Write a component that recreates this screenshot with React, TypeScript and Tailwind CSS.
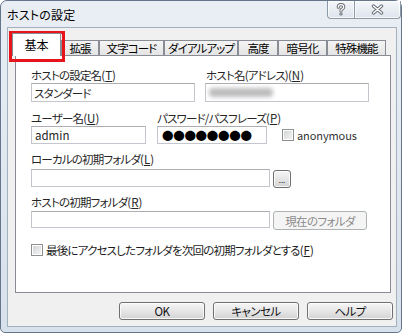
import React from 'react';

const Mn: React.FC<{ k: string }> = ({ k }) => (
  <span className="tracking-normal">
    (<span className="underline underline-offset-[1px]">{k}</span>)
  </span>
);

const Label: React.FC<{ children: React.ReactNode; className?: string }> = ({ children, className = '' }) => (
  <div className={`h-[16px] leading-[16px] text-[11.5px] tracking-[-0.8px] whitespace-nowrap ${className}`}>{children}</div>
);

const TextBox: React.FC<{ className: string; children?: React.ReactNode }> = ({ className, children }) => (
  <div
    className={`border border-[#c3c6cd] border-t-[#abadb3] bg-white pl-[2px] text-[11.5px] leading-[16px] flex items-center overflow-hidden whitespace-nowrap ${className}`}
  >
    {children}
  </div>
);

const CheckBox: React.FC = () => (
  <div className="w-[12px] h-[12px] border border-[#8e8f8f] bg-white p-px shrink-0">
    <div className="w-full h-full bg-linear-to-br from-[#d2d4d6] to-[#f4f4f4]" />
  </div>
);

const PushButton: React.FC<{ children: React.ReactNode; className?: string }> = ({ children, className = '' }) => (
  <div
    className={`border border-[#707070] rounded-[3px] bg-linear-to-b from-[#f6f6f6] via-[#e6e6e6] to-[#d3d3d3] shadow-[inset_0_0_0_1px_rgba(255,255,255,0.8)] flex items-center justify-center text-[11.5px] leading-[14px] tracking-[-0.6px] text-[#111] ${className}`}
  >
    {children}
  </div>
);

const tabs = [
  { label: '拡張', w: 'w-[38px]' },
  { label: '文字コード', w: 'w-[65px]' },
  { label: 'ダイアルアップ', w: 'w-[74px]' },
  { label: '高度', w: 'w-[40px]' },
  { label: '暗号化', w: 'w-[49px]' },
  { label: '特殊機能', w: 'w-[59px]' },
];

export default function App() {
  return (
    <div className="w-[408px] h-[336px] bg-white relative font-['Noto_Sans_CJK_JP',sans-serif] [font-feature-settings:'palt'] text-[#262626]">
      <div className="w-[402px] h-[333px] border border-[#66768a] rounded-t-[7px] rounded-b-[5px] bg-linear-to-b from-[#e9eef4] to-[#d7e1ec] flex flex-col">
        {/* title bar */}
        <div className="h-[26px] flex items-start shrink-0">
          <span className="ml-[6px] mt-[6px] text-[12px] leading-[16px] tracking-[0.2px] text-black">ホストの設定</span>
          <div className="ml-auto flex">
            <div className="w-[28px] h-[18px] border border-t-0 border-[#8d99a8] rounded-bl-[4px] bg-linear-to-b from-[#f4f7fa] to-[#dde4ec] shadow-[inset_0_0_0_1px_rgba(255,255,255,0.7)] flex items-center justify-center">
              <svg width="10" height="13" viewBox="0 0 10 13">
                <path d="M2.3 4.2 Q2.3 1.6 5 1.6 Q7.7 1.6 7.7 4 Q7.7 5.6 5.6 6.5 Q5 6.8 5 8" fill="none" stroke="#6a6f75" strokeWidth="3.2" strokeLinecap="round" />
                <path d="M2.3 4.2 Q2.3 1.6 5 1.6 Q7.7 1.6 7.7 4 Q7.7 5.6 5.6 6.5 Q5 6.8 5 8" fill="none" stroke="#ffffff" strokeWidth="1.3" strokeLinecap="round" />
                <circle cx="5" cy="11" r="1.6" fill="#6a6f75" />
                <circle cx="5" cy="11" r="0.6" fill="#ffffff" />
              </svg>
            </div>
            <div className="w-[47px] h-[18px] -ml-px border border-t-0 border-[#8d99a8] rounded-br-[4px] bg-linear-to-b from-[#f4f7fa] to-[#dde4ec] shadow-[inset_0_0_0_1px_rgba(255,255,255,0.7)] flex items-center justify-center">
              <svg width="13" height="11" viewBox="0 0 13 11">
                <path d="M2.5 2 L10.5 9 M10.5 2 L2.5 9" fill="none" stroke="#6a6f75" strokeWidth="3.4" strokeLinecap="round" />
                <path d="M2.5 2 L10.5 9 M10.5 2 L2.5 9" fill="none" stroke="#ffffff" strokeWidth="1.4" strokeLinecap="round" />
              </svg>
            </div>
          </div>
        </div>

        {/* body */}
        <div className="pl-[6px] pr-[4px] pb-[5px]">
          <div className="w-[390px] h-[300px] border border-[#a3b0bf] bg-[#f0f0f0] flex flex-col">
            {/* tabs */}
            <div className="flex items-end h-[23px] mt-[5px] pl-[4px] shrink-0">
              <div className="relative z-10 w-[49px] h-[23px] border border-b-0 border-[#898c95] bg-white text-center pt-[3px] text-[12px] leading-[16px] text-black">
                基本
              </div>
              {tabs.map((t) => (
                <div
                  key={t.label}
                  className={`${t.w} h-[16px] border border-b-0 border-[#898c95] bg-linear-to-b from-[#f4f4f4] to-[#e3e3e3] text-center text-[11.5px] leading-[14px] tracking-[-0.9px] text-black whitespace-nowrap`}
                >
                  {t.label}
                </div>
              ))}
            </div>

            {/* panel */}
            <div className="ml-[7px] -mt-px w-[376px] h-[238px] border border-[#898c95] bg-white pl-[15px] pt-[11px] shrink-0">
              <div className="flex gap-[10px]">
                <div className="w-[164px]">
                  <Label>
                    ホストの設定名<Mn k="T" />
                  </Label>
                  <TextBox className="w-[164px] h-[19px] tracking-[-0.8px]">スタンダード</TextBox>
                </div>
                <div className="w-[164px]">
                  <Label className="pl-px">
                    ホスト名(アドレス)<Mn k="N" />
                  </Label>
                  <TextBox className="w-[164px] h-[19px]">
                    <div className="ml-[1px] w-[64px] h-[9px] rounded-sm bg-[#bdbdbd] blur-[2px]" />
                  </TextBox>
                </div>
              </div>

              <div className="flex items-end mt-[8px]">
                <div className="w-[115px]">
                  <Label>
                    ユーザー名<Mn k="U" />
                  </Label>
                  <TextBox className="w-[115px] h-[18px] pl-[3px]">admin</TextBox>
                </div>
                <div className="ml-[11px] w-[110px]">
                  <Label>
                    パスワード/パスフレーズ<Mn k="P" />
                  </Label>
                  <TextBox className="w-[110px] h-[18px] pl-[4px]">
                    <span className="text-[11.5px] tracking-[-0.3px] text-black font-bold [font-feature-settings:normal]">●●●●●●●●</span>
                  </TextBox>
                </div>
                <div className="ml-[15px] mb-[1px] flex items-center gap-[3px] h-[16px]">
                  <CheckBox />
                  <span className="text-[11px] leading-[16px] tracking-[-0.1px] text-[#333] -mt-px">anonymous</span>
                </div>
              </div>

              <Label className="mt-[7px]">
                ローカルの初期フォルダ<Mn k="L" />
              </Label>
              <div className="flex items-start mt-[2px] gap-[3px]">
                <TextBox className="w-[239px] h-[18px]" />
                <PushButton className="w-[18px] h-[18px] mt-px items-end pb-[3px]">
                  <span className="text-[8px] leading-[8px] tracking-normal">...</span>
                </PushButton>
              </div>

              <Label className="mt-[6px]">
                ホストの初期フォルダ<Mn k="R" />
              </Label>
              <div className="flex items-start mt-px gap-[3px]">
                <TextBox className="w-[239px] h-[17px]" />
                <div className="w-[94px] h-[19px] border border-[#adb2b5] rounded-[3px] bg-[#f4f4f4] flex items-center justify-center text-[11.5px] leading-[14px] tracking-[-0.6px] text-[#8b8b8b]">
                  現在のフォルダ
                </div>
              </div>

              <div className="flex items-center gap-[3px] mt-[13px] h-[13px]">
                <CheckBox />
                <span className="text-[11.5px] leading-[16px] tracking-[-0.8px] whitespace-nowrap text-[#1c1c1c]">
                  最後にアクセスしたフォルダを次回の初期フォルダとする<Mn k="F" />
                </span>
              </div>
            </div>

            {/* buttons */}
            <div className="flex justify-end gap-[8px] pr-[3px] mt-[9px]">
              <PushButton className="w-[86px] h-[18px]">OK</PushButton>
              <PushButton className="w-[86px] h-[18px]">キャンセル</PushButton>
              <PushButton className="w-[86px] h-[18px]">ヘルプ</PushButton>
            </div>
          </div>
        </div>
      </div>

      {/* red highlight around the selected tab */}
      <div className="absolute left-[9px] top-[31px] w-[56px] h-[31px] border-[3px] border-[#e8141b] pointer-events-none" />
    </div>
  );
}
